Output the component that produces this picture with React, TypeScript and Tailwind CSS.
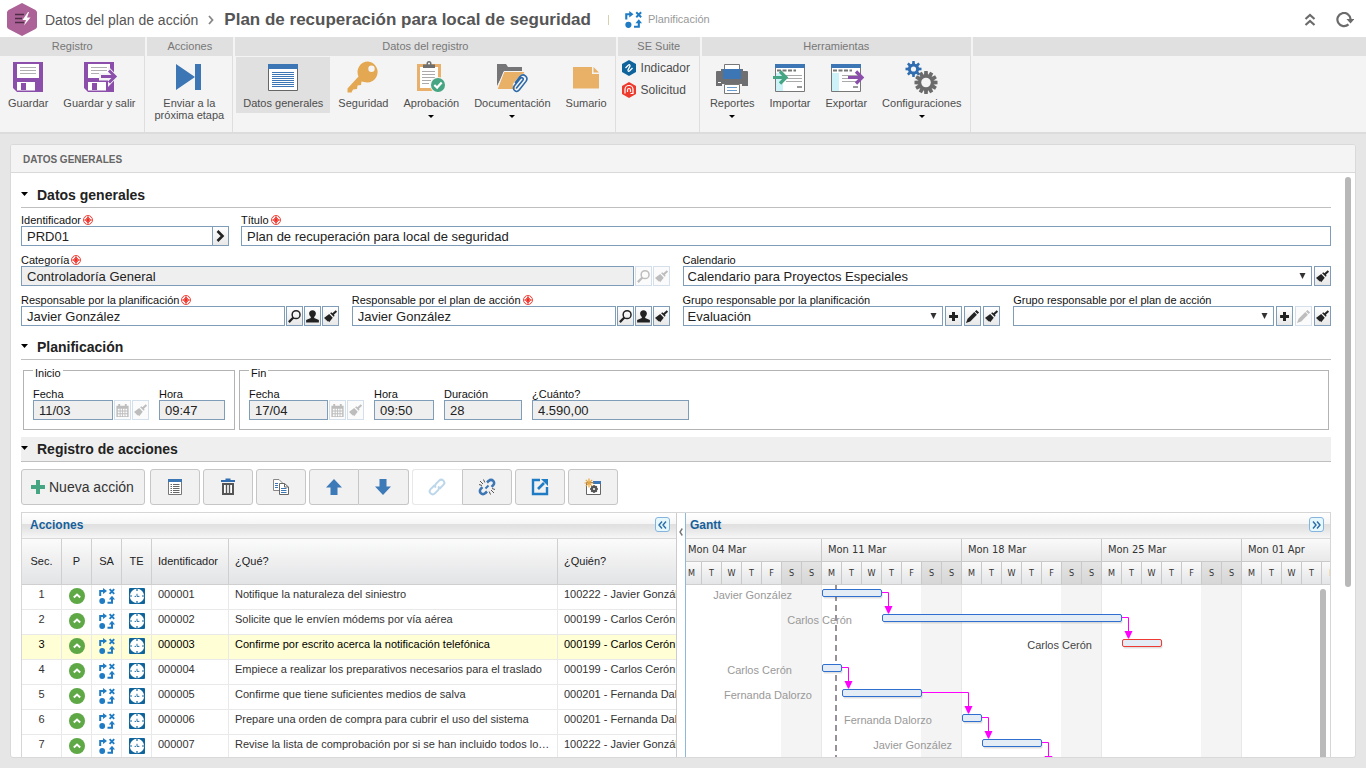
import { useId, type ReactNode } from 'react';
import clsx from 'clsx';

const ui = 'font-["Liberation_Sans",Arial,sans-serif]';

/* ---------- small icons ---------- */

function FlowIcon({ className }: { className?: string }) {
  return (
    <svg viewBox="0 0 16 16" className={clsx('h-4 w-4', className)} fill="#1e7bc4" stroke="#1e7bc4" aria-hidden="true">
      <path d="M1.2 8V3H5" fill="none" strokeWidth="2" />
      <path d="M4 0L8 3L4 6Z" stroke="none" />
      <path d="M10.6 1.2L15.2 5.8M15.2 1.2L10.6 5.8" strokeWidth="1.9" />
      <circle cx="3.2" cy="13" r="2.9" stroke="none" />
      <path d="M8.5 14.8H13V10.5" fill="none" strokeWidth="2" />
      <path d="M9.8 11.5L13 7.8L16 11.5Z" stroke="none" />
    </svg>
  );
}

function PriorityIcon() {
  return (
    <svg viewBox="0 0 16 16" className="mx-auto h-4 w-4" aria-hidden="true">
      <circle cx="8" cy="8" r="8" fill="#5ea846" />
      <path d="M4.8 9.6L8 6.6L11.2 9.6" fill="none" stroke="#fff" strokeWidth="2" />
    </svg>
  );
}

function TargetIcon() {
  return (
    <svg viewBox="0 0 16 16" className="mx-auto h-4 w-4" aria-hidden="true">
      <rect width="16" height="16" rx="1" fill="#0f649c" />
      <circle cx="8" cy="8" r="7.2" fill="#fff" />
      <path d="M8 0.8V3M8 13V15.2M0.8 8H3M13 8H15.2" stroke="#0f649c" strokeWidth="1.2" />
      <path d="M8 5.8V8.4H10.4M5.6 8.4H7" fill="none" stroke="#0f649c" strokeWidth="0.9" />
    </svg>
  );
}

function SearchIcon() {
  return (
    <svg viewBox="0 0 16 16" className="h-[15px] w-[15px]" fill="none" stroke="currentColor" aria-hidden="true">
      <circle cx="9.7" cy="6" r="4.2" strokeWidth="1.6" />
      <path d="M6.8 9L2 14" strokeWidth="2.4" />
    </svg>
  );
}

function UserIcon() {
  return (
    <svg viewBox="0 0 16 16" className="h-[15px] w-[15px]" fill="currentColor" aria-hidden="true">
      <path d="M8 1.2C10.2 1.2 11.6 2.6 11.6 4.8C11.6 6.5 10.7 7.8 9.8 8.5V9.6L14.8 11.6V14.5H1.2V11.6L6.2 9.6V8.5C5.3 7.8 4.4 6.5 4.4 4.8C4.4 2.6 5.8 1.2 8 1.2Z" />
    </svg>
  );
}

function BrushIcon() {
  return (
    <svg viewBox="0 0 16 16" className="h-[15px] w-[15px]" fill="currentColor" aria-hidden="true">
      <path d="M13.6 1.4L15 2.8L11.6 6L12.4 7.2L11.4 8.2L7.6 4.4L8.8 3.4L10 4.4Z" />
      <path d="M6.6 5.4L10.4 9.2L6.6 14L5.6 12.8L4.9 13.3L3.9 12L3 12L2.8 10.8L1 9.6Z" />
    </svg>
  );
}

function PencilIcon() {
  return (
    <svg viewBox="0 0 16 16" className="h-[15px] w-[15px]" fill="currentColor" aria-hidden="true">
      <path d="M12.2 1L15 3.8L13.4 5.4L10.6 2.6Z" />
      <path d="M9.9 3.3L12.7 6.1L5.6 13.2L1 15L2.8 10.4Z" />
    </svg>
  );
}

function PlusIcon() {
  return (
    <svg viewBox="0 0 16 16" className="h-[15px] w-[15px]" fill="currentColor" aria-hidden="true">
      <path d="M6.4 3.3H9.6V6.4H12.8V9.6H9.6V12.8H6.4V9.6H3.3V6.4H6.4Z" />
    </svg>
  );
}

function CalendarIcon() {
  return (
    <svg viewBox="0 0 16 16" className="h-[15px] w-[15px]" fill="currentColor" aria-hidden="true">
      <path fillRule="evenodd" d="M1.5 3H3.5V1H5.5V3H10.5V1H12.5V3H14.5V15H1.5ZM3 6V8H5V6ZM6 6V8H7.6V6ZM8.5 6V8H10.2V6ZM11.1 6V8H13V6ZM3 9V11H5V9ZM6 9V11H7.6V9ZM8.5 9V11H10.2V9ZM11.1 9V11H13V9ZM3 12V14H5V12ZM6 12V14H7.6V12ZM8.5 12V14H10.2V12ZM11.1 12V14H13V12Z" />
    </svg>
  );
}

function RequiredMark() {
  return (
    <svg viewBox="0 0 10 10" className="ml-0.5 h-2.5 w-2.5" fill="none" stroke="#ee2d24" aria-hidden="true">
      <circle cx="5" cy="5" r="4.5" strokeWidth="0.9" />
      <path d="M5 1.5V8.5M1.5 5H8.5" strokeWidth="1.7" />
      <path d="M2.8 2.8L7.2 7.2M7.2 2.8L2.8 7.2" strokeWidth="0.8" />
    </svg>
  );
}

/* ---------- ribbon icons, drawn on a 32px box ---------- */

function Floppy({ exit = false }: { exit?: boolean }) {
  return (
    <>
      <path d="M1 1H31V31H5L1 27Z" fill="#8b4fab" />
      <path d="M5 3H27V17H5Z" fill="#fff" />
      <path d="M8 6.5H24M8 9.5H24M8 12.5H24" stroke="#b0b0b0" />
      <path d="M5 21H23V29.5H5Z" fill="#fff" />
      <path d="M9 22H14V29H9Z" fill="#8b4fab" />
      {exit && (
        <>
          <path d="M16 12H25V5L35 15.5L25 26V19.5H16Z" fill="#f4f4f4" />
          <path d="M18 15.5H31M26 9.5L32 15.5L26 21.5" fill="none" stroke="#8b4fab" strokeWidth="3" />
        </>
      )}
    </>
  );
}

function Gear({ cx, cy, r, hole, color, teeth }: { cx: number; cy: number; r: number; hole: number; color: string; teeth: number }) {
  const w = r * 0.3;
  return (
    <g transform={`translate(${cx} ${cy})`}>
      {Array.from({ length: teeth }, (_, i) => (
        <path key={i} d={`M${-w / 2} ${-r}H${w / 2}L${w * 0.75} 0H${-w * 0.75}Z`} transform={`rotate(${(i * 360) / teeth})`} fill={color} />
      ))}
      <circle r={r * 0.7} fill={color} />
      <circle r={hole} fill="#f4f4f4" />
    </g>
  );
}

function ListWindow({ mode }: { mode: 'import' | 'export' }) {
  return (
    <>
      <path d="M1.5 3.5H30.5V30.5H1.5Z" fill="#fff" stroke="#777" />
      <path d="M1 3H31V7H1Z" fill="#3d76b5" />
      <path d="M3 9.5H22" stroke="#777" strokeWidth="2" strokeDasharray="4 1.5" />
      <path d="M2 12H9V30H2Z" fill="#cdf3f8" />
      <path d="M12 14.5H28M12 17.5H28M12 20.5H28" stroke="#aaa" />
      <path d="M23 26H28" stroke="#999" strokeWidth="2" />
      {mode === 'import' ? (
        <path d="M-1 16.5H11M6 10.5L12 16.5L6 22.5" fill="none" stroke="#46a583" strokeWidth="3.2" />
      ) : (
        <path d="M18 16.5H31M26 10.5L32 16.5L26 22.5" fill="none" stroke="#8b4fab" strokeWidth="3.2" />
      )}
    </>
  );
}

const ribbonIcons: Record<string, ReactNode> = {
  save: <Floppy />,
  saveExit: <Floppy exit />,
  send: <path d="M3 3L22 16V3H28V29H22V16L3 29Z" fill="#3d76b5" />,
  form: (
    <>
      <path d="M1.5 4.5H30.5V29.5H1.5Z" fill="#fff" stroke="#666" />
      <path d="M1 3H31V8H1Z" fill="#3d76b5" />
      <path d="M5 11.5H27M5 13.5H27M5 15.5H27M5 17.5H27M5 19.5H27M5 21.5H27M5 23.5H27M5 25.5H27" stroke="#3d76b5" />
    </>
  ),
  key: (
    <path
      fillRule="evenodd"
      fill="#e3a851"
      d="M21 0.5A10.5 10.5 0 1 1 17 21L14.5 20.5L14 24L10.5 24.5L10 28L6 28.5L4.5 31.5L0.5 31.5L0.5 27.5L11.5 15.5A10.5 10.5 0 0 1 21 0.5ZM24.5 4.5A3.2 3.2 0 1 0 24.5 10.9A3.2 3.2 0 1 0 24.5 4.5Z"
    />
  ),
  approve: (
    <>
      <path d="M3.5 4.5H24.5V28.5H3.5Z" fill="#fff" stroke="#e8b06a" strokeWidth="3" />
      <path d="M7 10.5H20M7 13.5H20M7 16.5H20M7 19.5H16M7 22.5H14" stroke="#aaa" />
      <path d="M8 3.5H11.5V2.5A2.5 2.5 0 0 1 16.5 2.5V3.5H20V7H8Z" fill="#6f6f6f" />
      <circle cx="14" cy="2.6" r="1" fill="#fff" />
      <circle cx="23" cy="24" r="8" fill="#f4f4f4" />
      <circle cx="23" cy="24" r="7" fill="#46a583" />
      <path d="M19.3 24L22.1 26.6L26.7 21.4" fill="none" stroke="#fff" strokeWidth="2.2" />
    </>
  ),
  docs: (
    <>
      <path d="M1 3H10L12 6H26V11H8L1 25Z" fill="#757578" />
      <path d="M8 10.5H29L22 28.5H1Z" fill="#e9b168" stroke="#f4f4f4" />
      <g fill="none" strokeLinecap="round">
        <path d="M21 24L27 17" stroke="#f4f4f4" strokeWidth="8" />
        <path d="M20.5 27L26.8 19.3C28.2 17.2 25.6 15.6 24.2 17.4L18.2 25C16 28.8 20.4 32.4 23.2 29L30 20.4C33 15.8 27.4 11.6 24 15.6L19.4 21.4" stroke="#2c69a8" strokeWidth="1.6" />
      </g>
    </>
  ),
  note: (
    <>
      <path d="M3 6H22V13H29V27.5H3Z" fill="#e9b168" />
      <path d="M23.5 6L29 11.5H23.5Z" fill="#e9b168" />
    </>
  ),
  printer: (
    <>
      <path d="M8.5 3.5H23.5V11H8.5Z" fill="#fff" stroke="#777" />
      <path d="M0 11Q0 10 1 10H5V8H27V10H31Q32 10 32 11V25H26V23H6V25H0Z" fill="#6f6f72" />
      <path d="M7 8H25V18H7Z" fill="#3d76b5" />
      <path d="M2 21.5H5" stroke="#fff" />
      <path d="M8.5 23.5H23.5V32.5H8.5Z" fill="#fff" stroke="#777" />
      <path d="M11 26.5H21M11 29.5H21" stroke="#6a9bd0" />
    </>
  ),
  import: <ListWindow mode="import" />,
  export: <ListWindow mode="export" />,
  gears: (
    <>
      <Gear cx={7.5} cy={8} r={8} hole={2.6} color="#2f6db0" teeth={8} />
      <Gear cx={20} cy={21.5} r={11.5} hole={4.8} color="#6b6b6b" teeth={12} />
    </>
  ),
};

/* ---------- ribbon ---------- */

type RibbonItem = { icon: string; label: string[]; menu?: boolean; active?: boolean };

function RibbonButton({ icon, label, menu, active }: RibbonItem) {
  return (
    <button
      type="button"
      className={clsx('flex flex-col items-center self-start px-[7px] pt-1 text-[11px] leading-3 text-[#4d4d4d]', active ? 'bg-[#e0e0e0] pb-1' : '')}
    >
      <svg viewBox="0 0 32 32" className="mb-1 h-8 w-8 overflow-visible" aria-hidden="true">
        {ribbonIcons[icon]}
      </svg>
      {label.map((line) => (
        <span key={line} className="whitespace-nowrap">{line}</span>
      ))}
      {menu && (
        <svg viewBox="0 0 6 3" className="mt-1.5 h-[3px] w-1.5" aria-hidden="true">
          <path d="M0 0H6L3 3Z" />
        </svg>
      )}
    </button>
  );
}

function RibbonGroup({ title, children }: { title: string; children: ReactNode }) {
  return (
    <div className="mr-0.5 flex flex-col">
      <div className="h-[19px] bg-[#e0e0e0] text-center text-[11px] leading-[19px] text-[#777]">{title}</div>
      <div className="flex flex-1 gap-px border-r border-[#dedede] px-px pt-px">{children}</div>
    </div>
  );
}

const groups: { title: string; items: RibbonItem[] }[] = [
  { title: 'Registro', items: [{ icon: 'save', label: ['Guardar'] }, { icon: 'saveExit', label: ['Guardar y salir'] }] },
  { title: 'Acciones', items: [{ icon: 'send', label: ['Enviar a la', 'próxima etapa'] }] },
  {
    title: 'Datos del registro',
    items: [
      { icon: 'form', label: ['Datos generales'], active: true },
      { icon: 'key', label: ['Seguridad'] },
      { icon: 'approve', label: ['Aprobación'], menu: true },
      { icon: 'docs', label: ['Documentación'], menu: true },
      { icon: 'note', label: ['Sumario'] },
    ],
  },
];

const tools: RibbonItem[] = [
  { icon: 'printer', label: ['Reportes'], menu: true },
  { icon: 'import', label: ['Importar'] },
  { icon: 'export', label: ['Exportar'] },
  { icon: 'gears', label: ['Configuraciones'], menu: true },
];

function SuiteLinks() {
  return (
    <div className="flex flex-col pr-2 pl-0.5">
      <a href="#indicador" className="flex h-[22px] items-center gap-1 text-xs text-[#4d4d4d]">
        <svg viewBox="0 0 16 16" className="h-4 w-4" aria-hidden="true">
          <path d="M8 0L15 4V12L8 16L1 12V4Z" fill="#0f649c" />
          <path d="M4.5 8L7.5 5Q9 4 9 6L7 10Q7 12 8.5 11L11.5 8" fill="none" stroke="#fff" strokeWidth="1.3" />
        </svg>
        Indicador
      </a>
      <a href="#solicitud" className="flex h-[22px] items-center gap-1 text-xs text-[#4d4d4d]">
        <svg viewBox="0 0 16 16" className="h-4 w-4" aria-hidden="true">
          <path d="M8 0L15 4V12L8 16L1 12V4Z" fill="#ee3a2d" />
          <path d="M4 11.5V7.5A4 4 0 0 1 12 7.5V11.5H9.5M6.5 10V8A1.5 1.5 0 0 1 9.5 8V10" fill="none" stroke="#fff" strokeWidth="1.2" />
        </svg>
        Solicitud
      </a>
    </div>
  );
}

/* ---------- form pieces ---------- */

const inputBase = 'h-5 w-full min-w-0 flex-1 rounded-none border border-[#7f9db9] text-[13px] text-[#222] outline-none';

function SmallButton({ label, disabled, children }: { label: string; disabled?: boolean; children: ReactNode }) {
  return (
    <button
      type="button"
      aria-label={label}
      disabled={disabled}
      className={clsx(
        'flex h-5 w-[17px] shrink-0 items-center justify-center border',
        disabled ? 'border-[#d3e0ec] bg-[#fbfbfb] text-[#bdbdbd]' : 'border-[#7f9db9] bg-linear-to-b from-white to-[#e8e8e8] text-[#222]',
      )}
    >
      {children}
    </button>
  );
}

type FieldProps = {
  label: string;
  value: string;
  required?: boolean;
  locked?: boolean;
  select?: boolean;
  className?: string;
  children?: ReactNode;
};

function Field({ label, value, required, locked, select, className, children }: FieldProps) {
  const id = useId();
  return (
    <div className={clsx('flex min-w-0 flex-col', className)}>
      <label htmlFor={id} className="flex items-center text-[11px] leading-3 whitespace-nowrap text-[#111]">
        {label}
        {required && <RequiredMark />}
      </label>
      <div className={clsx('flex', select ? 'gap-0.5' : 'gap-px')}>
        {select ? (
          <div className="relative flex min-w-0 flex-1">
            <select id={id} defaultValue={value} className={clsx(inputBase, 'appearance-none bg-white px-1 pt-0.5 leading-4')}>
              <option>{value}</option>
            </select>
            <svg viewBox="0 0 7 6" className="pointer-events-none absolute top-[7px] right-1.5 h-1.5 w-[7px]" aria-hidden="true">
              <path d="M0.5 0H6.5L3.5 6Z" fill="#333" />
            </svg>
          </div>
        ) : (
          <input id={id} type="text" defaultValue={value} readOnly={locked} className={clsx(inputBase, 'px-[5px] leading-[18px]', locked ? 'bg-[#efefef]' : 'bg-white')} />
        )}
        {children}
      </div>
    </div>
  );
}

function SectionTitle({ title, shaded }: { title: string; shaded?: boolean }) {
  return (
    <h2 className={clsx('flex h-[25px] items-center border-b border-[#bfbfbf] text-sm font-bold text-[#222]', shaded && 'bg-[#efefef]')}>
      <svg viewBox="0 0 7 6" className="mr-[9px] h-1.5 w-[7px]" aria-hidden="true">
        <path d="M0 0H7L3.5 4Z" />
      </svg>
      {title}
    </h2>
  );
}

/* ---------- toolbar ---------- */

function ToolButton({ label, disabled, className, children }: { label: string; disabled?: boolean; className?: string; children: ReactNode }) {
  return (
    <button
      type="button"
      aria-label={label}
      disabled={disabled}
      className={clsx('flex h-9 w-[50px] items-center justify-center border', disabled ? 'border-[#e8e8e8] bg-white' : 'border-[#c6c6c6] bg-[#f1f1f1]', className ?? 'rounded-[3px]')}
    >
      <svg viewBox="0 0 18 18" className="h-[18px] w-[18px]" fill="none" aria-hidden="true">
        {children}
      </svg>
    </button>
  );
}

function Toolbar() {
  return (
    <div className="mt-[7px] flex gap-[3px]">
      <button type="button" className="mr-0.5 flex h-9 items-center gap-1 rounded-[3px] border border-[#c6c6c6] bg-[#f1f1f1] pr-2.5 pl-[9px] text-sm whitespace-nowrap text-[#333]">
        <svg viewBox="0 0 14 14" className="h-3.5 w-3.5" aria-hidden="true">
          <path d="M5 0H9V5H14V9H9V14H5V9H0V5H5Z" fill="#46a583" />
        </svg>
        Nueva acción
      </button>
      <ToolButton label="Datos de la acción">
        <path d="M2.5 1.5H15.5V16.5H2.5Z" fill="#fff" stroke="#777" />
        <path d="M2 1H16V4H2Z" fill="#3d76b5" />
        <path d="M4.5 6.5H6M4.5 8.5H6M4.5 10.5H6M4.5 12.5H6M4.5 14.5H6M7 6.5H13.5M7 8.5H13.5M7 10.5H13.5M7 12.5H13.5M7 14.5H13.5" stroke="#666" />
      </ToolButton>
      <ToolButton label="Eliminar">
        <path d="M2 3H16M6.5 1.5H11.5" stroke="#2f6db0" strokeWidth="2" />
        <path d="M4 6H14V16H4Z" fill="#fff" stroke="#555" strokeWidth="2" />
        <path d="M7.5 6V16M10.5 6V16" stroke="#555" strokeWidth="1.4" />
      </ToolButton>
      <ToolButton label="Copiar">
        <path d="M1.5 1.5H7L10.5 5V12.5H1.5Z" fill="#fff" stroke="#888" />
        <path d="M3 5.5H6M3 7.5H6M3 9.5H6" stroke="#3d76b5" />
        <path d="M7.5 5.5H12.5L16.5 9V16.5H7.5Z" fill="#fff" stroke="#666" />
        <path d="M12.5 5.5V9H16.5" stroke="#666" />
        <path d="M9 10.5H14.5M9 12.5H14.5M9 14.5H14.5" stroke="#3d76b5" />
      </ToolButton>
      <div className="flex">
        <ToolButton label="Subir" className="rounded-l-[3px]">
          <path d="M9 1L17 9.5H12.5V17H5.5V9.5H1Z" fill="#3d7ab8" />
        </ToolButton>
        <ToolButton label="Bajar" className="rounded-r-[3px] border-l-0">
          <path d="M9 17L17 8.5H12.5V1H5.5V8.5H1Z" fill="#3d7ab8" />
        </ToolButton>
      </div>
      <div className="flex">
        <ToolButton label="Vincular" disabled className="rounded-l-[3px] border-r-0">
          <g transform="rotate(-45 9 9)" stroke="#bcd6ea" strokeWidth="2">
            <path d="M8.5 6H3A3 3 0 0 0 3 12H7.5A3 3 0 0 0 10.3 9.5" />
            <path d="M9.5 12H15A3 3 0 0 0 15 6H10.5A3 3 0 0 0 7.7 8.5" />
          </g>
        </ToolButton>
        <ToolButton label="Desvincular" className="rounded-r-[3px]">
          <g stroke="#3d76b5" strokeWidth="2.6">
            <path d="M9 4.5L10.8 2.8A3 3 0 0 1 15.2 7.2L13.6 8.8" />
            <path d="M9 13.5L7.2 15.2A3 3 0 0 1 2.8 10.8L4.4 9.2" />
            <path d="M7.5 10.5L10.5 7.5" strokeWidth="2" />
          </g>
          <path d="M2 3L5 6M5.5 1.5L6.8 4.5M1 6.5L4 7.5M16 15L13 12M12.5 16.5L11.2 13.5M17 11.5L14 10.5" stroke="#555" />
        </ToolButton>
      </div>
      <ToolButton label="Abrir">
        <path d="M9 2H2V16H16V9" stroke="#1e7bc4" strokeWidth="2.4" />
        <path d="M7 11L13 5" stroke="#1e7bc4" strokeWidth="2.6" />
        <path d="M10 1H17V8Z" fill="#1e7bc4" />
      </ToolButton>
      <ToolButton label="Nueva configuración">
        <path d="M2.5 4.5H16.5V16.5H2.5Z" fill="#fff" stroke="#666" />
        <path d="M9 3H17V6H9Z" fill="#3d76b5" />
        <circle cx="10" cy="11" r="2.2" stroke="#555" strokeWidth="2.4" />
        <path d="M10 7V8.5M10 13.5V15M6 11H7.5M12.5 11H14M7.2 8.2L8.2 9.2M12.8 13.8L11.8 12.8M12.8 8.2L11.8 9.2M7.2 13.8L8.2 12.8" stroke="#555" strokeWidth="1.4" />
        <path d="M5 0.5V9.5M0.5 5H9.5M1.8 1.8L8.2 8.2M8.2 1.8L1.8 8.2" stroke="#e7a53f" strokeWidth="1.2" />
      </ToolButton>
    </div>
  );
}

/* ---------- actions grid ---------- */

const actions = [
  { id: '000001', what: 'Notifique la naturaleza del siniestro', who: '100222 - Javier González' },
  { id: '000002', what: 'Solicite que le envíen módems por vía aérea', who: '000199 - Carlos Cerón' },
  { id: '000003', what: 'Confirme por escrito acerca la notificación telefónica', who: '000199 - Carlos Cerón' },
  { id: '000004', what: 'Empiece a realizar los preparativos necesarios para el traslado', who: '000199 - Carlos Cerón' },
  { id: '000005', what: 'Confirme que tiene suficientes medios de salva', who: '000201 - Fernanda Dalorzo' },
  { id: '000006', what: 'Prepare una orden de compra para cubrir el uso del sistema', who: '000201 - Fernanda Dalorzo' },
  { id: '000007', what: 'Revise la lista de comprobación por si se han incluido todos los pasos', who: '100222 - Javier González' },
];

const columns = [
  { title: 'Sec.', cls: 'w-10 text-center' },
  { title: 'P', cls: 'w-[30px] text-center' },
  { title: 'SA', cls: 'w-[30px] text-center' },
  { title: 'TE', cls: 'w-[30px] text-center' },
  { title: 'Identificador', cls: 'w-[77px] pl-1.5 text-left' },
  { title: '¿Qué?', cls: 'w-[329px] pl-1.5 text-left' },
  { title: '¿Quién?', cls: 'pl-1.5 text-left' },
];

function PaneTitle({ title, side }: { title: string; side: 'left' | 'right' }) {
  return (
    <div
      className={clsx(
        'flex h-[26px] shrink-0 items-center justify-between border-b border-[#d9d9d9] bg-[linear-gradient(#ffffff_0%,#f5f5f5_46%,#e0e0e0_46%,#e4e4e4_60%,#f6f6f6_100%)] pb-0.5 text-xs font-bold text-[#15609b]',
        side === 'left' ? 'pr-1.5 pl-2' : 'pr-1.5 pl-1',
      )}
    >
      {title}
      <button type="button" aria-label={`Contraer ${title}`} className="flex h-[15px] w-[15px] items-center justify-center rounded-[3px] border border-[#86b4dd] bg-[#e6f8fc]">
        <svg viewBox="0 0 9 8" className={clsx('h-2 w-[9px]', side === 'right' && 'rotate-180')} fill="none" stroke="#2c6ca8" strokeWidth="1.4" aria-hidden="true">
          <path d="M4 0.5L1 4L4 7.5M8 0.5L5 4L8 7.5" />
        </svg>
      </button>
    </div>
  );
}

function ActionsPane() {
  const cell = 'border-r border-b border-[#e9e9e9]';
  const text = 'overflow-hidden pt-0.5 pl-1.5 whitespace-nowrap';
  return (
    <div className="flex w-1/2 flex-col overflow-hidden">
      <PaneTitle title="Acciones" side="left" />
      <table className="w-full table-fixed border-separate border-spacing-0 text-[11px] leading-[15px] text-[#333]">
        <thead>
          <tr className="h-[46px] bg-linear-to-b from-[#fbfbfb] to-[#e2e3e5] text-[#222]">
            {columns.map((col) => (
              <th key={col.title} className={clsx('border-r border-b border-[#cfcfcf] font-normal last:border-r-0', col.cls)}>
                {col.title}
              </th>
            ))}
          </tr>
        </thead>
        <tbody>
          {actions.map((row, i) => (
            <tr key={row.id} className={clsx('h-[25px] align-top', i === 2 && 'bg-[#fffed4] text-black')}>
              <td className={clsx(cell, 'pt-0.5 text-center')}>{i + 1}</td>
              <td className={clsx(cell, 'pt-[3px] pl-px')}><PriorityIcon /></td>
              <td className={clsx(cell, 'pt-[3px] pl-px')}><FlowIcon className="mx-auto" /></td>
              <td className={clsx(cell, 'pt-[3px] pl-px')}><TargetIcon /></td>
              <td className={clsx(cell, text)}>{row.id}</td>
              <td className={clsx(cell, text, 'pr-1 text-ellipsis')}>{row.what}</td>
              <td className={clsx('border-b border-[#e9e9e9]', text)}>{row.who}</td>
            </tr>
          ))}
        </tbody>
      </table>
    </div>
  );
}

/* ---------- gantt ---------- */

const DAY = 20;
const ROW = 25;
const weeks = ['Mon 04 Mar', 'Mon 11 Mar', 'Mon 18 Mar', 'Mon 25 Mar', 'Mon 01 Apr'];
const days = ['M', 'T', 'W', 'T', 'F', 'S', 'S'];

// start and length are in days from Mon 04 Mar
const bars = [
  { who: 'Javier González', start: 7, len: 3, next: 1 },
  { who: 'Carlos Cerón', start: 10, len: 12, next: 1 },
  { who: 'Carlos Cerón', start: 22, len: 2, next: 0, critical: true },
  { who: 'Carlos Cerón', start: 7, len: 1, next: 1 },
  { who: 'Fernanda Dalorzo', start: 8, len: 4, next: 1 },
  { who: 'Fernanda Dalorzo', start: 14, len: 1, next: 1 },
  { who: 'Javier González', start: 15, len: 3, next: 1 },
];

function GanttChart() {
  return (
    <svg className={clsx('-ml-1 h-full w-[900px] max-w-none', ui)} aria-label="Gantt">
      {weeks.map((w, i) => (
        <g key={w}>
          <rect x={i * 140 + 99} y="0" width="41" height="100%" fill="#f4f4f4" />
          <path d={`M${i * 140 + 139.5} 0V600`} stroke="#e8e8e8" />
        </g>
      ))}
      <path d="M154 0V600" stroke="#999199" strokeWidth="2" strokeDasharray="6 4" />
      {bars.map((b, i) => {
        const x = b.start * DAY;
        const y = i * ROW + 4;
        const end = x + b.len * DAY;
        const following = bars[i + 1];
        const drop = following ? following.start * DAY + 6.5 : end + 6.5;
        return (
          <g key={i}>
            <text x={x - 30} y={y + 10} textAnchor="end" fontSize="11" fill={b.critical ? '#444' : '#999'}>
              {b.who}
            </text>
            <rect x={x + 1.5} y={y + 1.5} width={b.len * DAY - 1} height="8" rx="1.5" fill="#000" opacity="0.12" />
            <rect x={x + 0.5} y={y + 0.5} width={b.len * DAY - 1} height="7" rx="1.5" fill="#e4ecf5" stroke={b.critical ? '#ee3a32' : '#2f6fd0'} />
            {b.next === 1 && (
              <>
                <path d={`M${end} ${y + 3.5}H${drop}V${y + 22}`} fill="none" stroke="#ff00ff" />
                <path d={`M${drop - 4} ${y + 17}H${drop + 4}L${drop + 0.5} ${y + 24.5}H${drop - 0.5}Z`} fill="#ff00ff" />
              </>
            )}
          </g>
        );
      })}
    </svg>
  );
}

function GanttPane() {
  return (
    <div className="relative flex min-w-0 flex-1 flex-col overflow-hidden">
      <PaneTitle title="Gantt" side="right" />
      <div className='-ml-1 flex h-[46px] shrink-0 border-b border-[#cfcfcf] font-["DejaVu_Sans_Condensed","DejaVu_Sans",sans-serif] text-[#333]'>
        {weeks.map((w) => (
          <div key={w} className="w-[140px] shrink-0">
            <div className="h-[23px] border-r border-b border-[#c9c9c9] bg-linear-to-b from-[#fafafa] to-[#e9e9e9] pl-1.5 text-[11px] leading-[22px]">{w}</div>
            <div className="flex h-[22px]">
              {days.map((d, i) => (
                <div
                  key={i}
                  className={clsx(
                    'w-5 border-r border-[#c9c9c9] bg-linear-to-b text-center text-[9px] leading-[22px]',
                    i > 4 ? 'from-[#e4e4e4] to-[#d6d6d6]' : 'from-[#fafafa] to-[#e4e5e7]',
                  )}
                >
                  {d}
                </div>
              ))}
            </div>
          </div>
        ))}
      </div>
      <div className="min-h-0 flex-1 overflow-hidden">
        <GanttChart />
      </div>
      <div className="absolute top-[76px] right-1 bottom-0 w-1.5 rounded-t-full bg-[#bababa]" />
    </div>
  );
}

/* ---------- page ---------- */

function TopBar() {
  return (
    <header className="flex h-[37px] shrink-0 items-center bg-white pt-0.5 pr-3 pl-1.5 whitespace-nowrap">
      <svg viewBox="0 0 32 34" className="mr-[7px] h-[34px] w-8" aria-hidden="true">
        <path d="M16 0L29.5 7Q31 8 31 9.5V23.5Q31 25 29.5 26L16 33L2.5 26Q1 25 1 23.5V9.5Q1 8 2.5 7Z" fill="#ac6297" />
        <path d="M9 11.5H18M9 15.5H16M9 19.5H18" stroke="#4d2d46" strokeWidth="1.6" />
        <path d="M22 9L16.5 17H20L18 22.5L24.5 14.5H21L23 9Z" fill="#fff" />
      </svg>
      <a href="#plan" className="text-sm text-[#555]">Datos del plan de acción</a>
      <svg viewBox="0 0 6 10" className="mx-2.5 h-2.5 w-1.5" fill="none" stroke="#888" strokeWidth="1.8" aria-hidden="true">
        <path d="M1 1L4.5 5L1 9" />
      </svg>
      <h1 className="text-[17px] leading-5 font-bold text-[#555]">Plan de recuperación para local de seguridad</h1>
      <span className="ml-[17px] h-2.5 w-px bg-[#d8cfae]" />
      <FlowIcon className="ml-4 h-[17px] w-[17px]" />
      <span className="ml-1.5 text-[11px] text-[#999]">Planificación</span>
      <button type="button" aria-label="Contraer" className="ml-auto">
        <svg viewBox="0 0 12 14" className="h-3.5 w-3" fill="none" stroke="#6b6b6b" strokeWidth="2.2" aria-hidden="true">
          <path d="M1.5 6L6 2L10.5 6M1.5 12L6 8L10.5 12" />
        </svg>
      </button>
      <button type="button" aria-label="Actualizar" className="ml-5">
        <svg viewBox="0 0 18 16" className="h-4 w-[18px]" aria-hidden="true">
          <path d="M12.5 12.4A6.6 6.6 0 1 1 14.6 7.4" fill="none" stroke="#6b6b6b" strokeWidth="2.2" />
          <path d="M10.5 7H18.5L14.5 11.5Z" fill="#6b6b6b" />
        </svg>
      </button>
    </header>
  );
}

export default function App() {
  return (
    <div className={clsx('flex h-screen flex-col overflow-hidden bg-[#e6e6e6]', ui)}>
      <TopBar />

      <nav className="flex h-[97px] shrink-0 border-b-2 border-[#dcdcdc] bg-[#f4f4f4]">
        {groups.map((g) => (
          <RibbonGroup key={g.title} title={g.title}>
            {g.items.map((item) => (
              <RibbonButton key={item.icon} {...item} />
            ))}
          </RibbonGroup>
        ))}
        <RibbonGroup title="SE Suite">
          <SuiteLinks />
        </RibbonGroup>
        <RibbonGroup title="Herramientas">
          {tools.map((item) => (
            <RibbonButton key={item.icon} {...item} />
          ))}
        </RibbonGroup>
        <div className="h-[19px] flex-1 bg-[#e0e0e0]" />
      </nav>

      <main className="flex min-h-0 flex-1 flex-col p-2.5">
        <div className="relative flex min-h-0 flex-1 flex-col overflow-hidden rounded-[3px] border border-[#d9d9d9] bg-white">
          <div className="flex h-7 shrink-0 items-center border-b border-[#d9d9d9] bg-[#f4f4f4] pt-0.5 pl-3 text-[10px] font-bold text-[#666]">DATOS GENERALES</div>

          <div className="flex min-h-0 flex-1 flex-col overflow-hidden pt-2.5 pr-6 pl-2.5 *:shrink-0">
            <SectionTitle title="Datos generales" />
            <div className="flex flex-col gap-2 pt-1.5 pb-[9px]">
              <div className="flex gap-3">
                <Field label="Identificador" value="PRD01" required className="w-52">
                  <button type="button" aria-label="Siguiente" className="-ml-0.5 flex h-5 w-[17px] items-center justify-center border border-[#7f9db9] bg-linear-to-b from-white to-[#e8e8e8]">
                    <svg viewBox="0 0 9 12" className="h-3 w-[9px]" fill="none" stroke="#222" strokeWidth="2.6" aria-hidden="true">
                      <path d="M1.5 1L6.5 6L1.5 11" />
                    </svg>
                  </button>
                </Field>
                <Field label="Título" value="Plan de recuperación para local de seguridad" required className="flex-1" />
              </div>
              <div className="grid grid-cols-2 gap-[13px]">
                <Field label="Categoría" value="Controladoría General" required locked>
                  <SmallButton label="Buscar" disabled><SearchIcon /></SmallButton>
                  <SmallButton label="Limpiar" disabled><BrushIcon /></SmallButton>
                </Field>
                <Field label="Calendario" value="Calendario para Proyectos Especiales" select>
                  <SmallButton label="Limpiar"><BrushIcon /></SmallButton>
                </Field>
              </div>
              <div className="grid grid-cols-4 gap-[13px]">
                {['Responsable por la planificación', 'Responsable por el plan de acción'].map((label) => (
                  <Field key={label} label={label} value="Javier González" required>
                    <SmallButton label="Buscar"><SearchIcon /></SmallButton>
                    <SmallButton label="Usuario"><UserIcon /></SmallButton>
                    <SmallButton label="Limpiar"><BrushIcon /></SmallButton>
                  </Field>
                ))}
                <Field label="Grupo responsable por la planificación" value="Evaluación" select>
                  <SmallButton label="Agregar"><PlusIcon /></SmallButton>
                  <SmallButton label="Editar"><PencilIcon /></SmallButton>
                  <SmallButton label="Limpiar"><BrushIcon /></SmallButton>
                </Field>
                <Field label="Grupo responsable por el plan de acción" value="" select>
                  <SmallButton label="Agregar"><PlusIcon /></SmallButton>
                  <SmallButton label="Editar" disabled><PencilIcon /></SmallButton>
                  <SmallButton label="Limpiar"><BrushIcon /></SmallButton>
                </Field>
              </div>
            </div>

            <SectionTitle title="Planificación" />
            <div className="mx-0.5 mt-px mb-[7px] flex gap-1 text-[11px] leading-3">
              <fieldset className="border border-[#b3b3b3] px-[9px] pb-[9px]">
                <legend className="px-0.5 pt-1.5 text-[#111]">Inicio</legend>
                <div className="flex gap-2.5 pt-[9px]">
                  <Field label="Fecha" value="11/03" locked className="w-[116px]">
                    <SmallButton label="Calendario" disabled><CalendarIcon /></SmallButton>
                    <SmallButton label="Limpiar" disabled><BrushIcon /></SmallButton>
                  </Field>
                  <Field label="Hora" value="09:47" locked className="w-[66px]" />
                </div>
              </fieldset>
              <fieldset className="flex-1 border border-[#b3b3b3] px-[9px] pb-[9px]">
                <legend className="px-0.5 pt-1.5 text-[#111]">Fin</legend>
                <div className="flex gap-2.5 pt-[9px]">
                  <Field label="Fecha" value="17/04" locked className="w-[115px]">
                    <SmallButton label="Calendario" disabled><CalendarIcon /></SmallButton>
                    <SmallButton label="Limpiar" disabled><BrushIcon /></SmallButton>
                  </Field>
                  <Field label="Hora" value="09:50" locked className="w-[60px]" />
                  <Field label="Duración" value="28" locked className="w-[78px]" />
                  <Field label="¿Cuánto?" value="4.590,00" locked className="w-[157px]" />
                </div>
              </fieldset>
            </div>

            <SectionTitle title="Registro de acciones" shaded />
            <Toolbar />

            <div className="mt-[7px] flex min-h-0 flex-1 overflow-hidden border-x border-t border-[#d6d6d6]">
              <ActionsPane />
              <div className="flex w-2.5 shrink-0 justify-center border-r border-l border-r-[#8fb8dc] border-l-[#cccccc] bg-white pt-[15px]">
                <svg viewBox="0 0 4 8" className="h-2 w-1" fill="none" stroke="#777" strokeWidth="1.4" aria-hidden="true">
                  <path d="M3.3 0.5L1 4L3.3 7.5" />
                </svg>
              </div>
              <GanttPane />
            </div>
          </div>

          <div className="absolute top-8 right-1 h-[67%] w-1.5 rounded-full bg-[#b8b8b8]" />
        </div>
      </main>
    </div>
  );
}
